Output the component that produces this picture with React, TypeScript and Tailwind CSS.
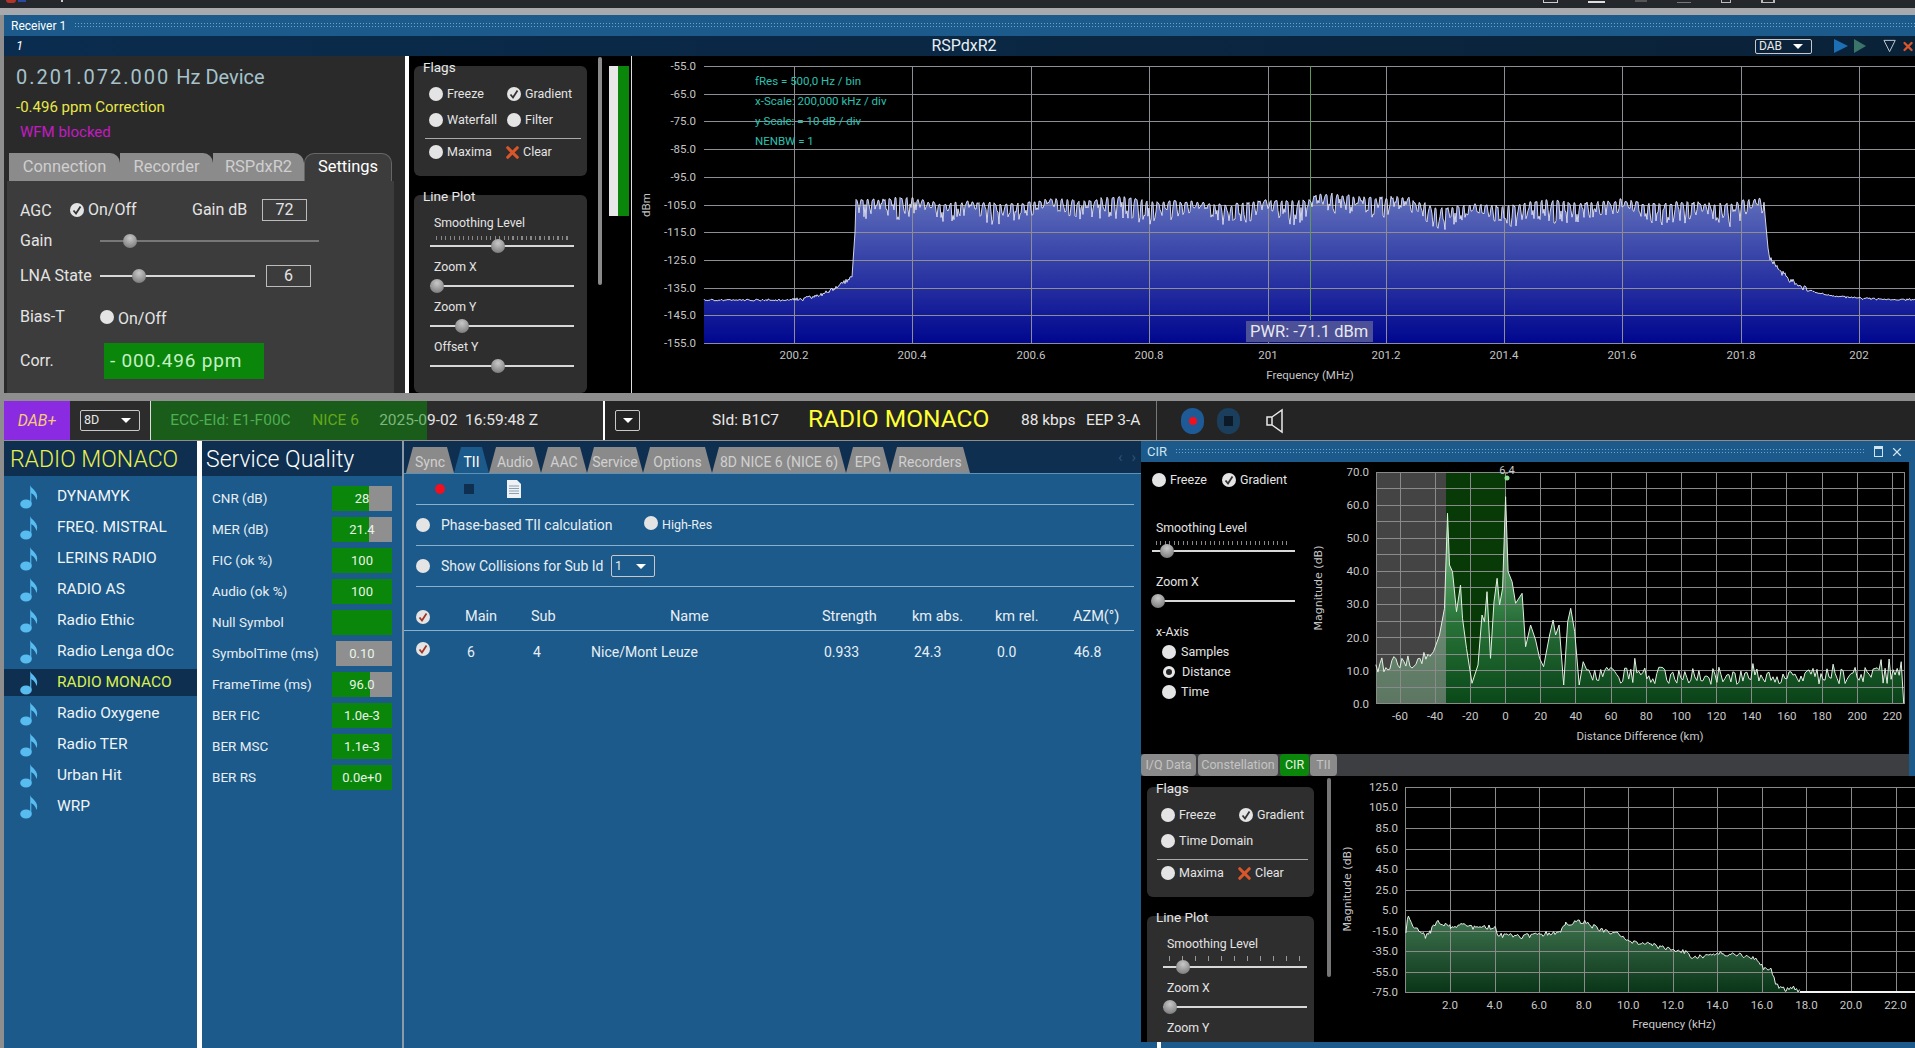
import { X } from 'lucide-react'

let seed = 4711
const rnd = () => {
  seed = (seed * 16807) % 2147483647
  return seed / 2147483647
}
const jit = (n: number) => (rnd() - 0.5) * 2 * n

const toPoly = (pts: number[][]) => pts.map((p) => `${p[0].toFixed(1)},${p[1].toFixed(1)}`).join(' ')

function spectrumPoints() {
  const pts: number[][] = []
  let phase = 0
  for (let x = 704; x <= 1915; x += 1) {
    let y = 300
    if (x < 790) y = 300 + jit(1)
    else if (x < 852) y = 300 - 23 * ((x - 790) / 62) ** 2 + jit(2)
    else if (x < 856) y = 277 - (x - 852) * 15
    else if (x < 1765) {
      phase += 0.95 + rnd() * 0.35
      const lift = x > 1310 && x < 1410 ? -3 : 0
      const sag = x > 1430 && x < 1620 ? 3 : 0
      const env = 200 + 2.5 * Math.sin(x / 37) + 1.5 * Math.sin(x / 11.3) + lift + sag
      const depth = 0.25 + 0.75 * Math.abs(Math.sin(x / 23 + Math.sin(x / 71) * 2))
      y = Math.sin(phase) > 0.2 ? env + rnd() * 3 : env + 3 + (2 + rnd() * 20) * depth
    } else if (x < 1769) y = 215 + (x - 1765) * 11
    else y = 300 - 42 * Math.exp(-(x - 1770) / 28) + jit(x < 1810 ? 3 : 1)
    pts.push([x, y])
  }
  return pts
}

function cirPoints() {
  const raw: number[][] = []
  for (let zx = 491; zx < 600; zx += 4) raw.push([zx, 815 - (zx - 491) * 0.25 + jit(24)])
  const peaks = [
    [606, 770], [618, 720], [628, 640], [634, 355], [638, 510], [644, 530], [652, 650], [660, 570], [664, 670],
    [672, 760], [683, 865], [695, 810], [703, 660], [708, 680], [713, 590], [720, 790], [727, 620], [733, 550],
    [738, 630], [744, 580], [750, 305], [755, 530], [763, 560], [770, 625], [783, 595], [790, 755], [800, 690],
    [810, 735], [818, 790], [826, 815], [838, 720], [845, 675], [850, 720], [857, 690], [866, 870], [874, 680],
    [880, 640], [888, 710], [897, 870], [905, 800],
  ]
  raw.push(...peaks)
  for (let zx = 912; zx < 1540; zx += 4) {
    const spike = rnd() > 0.93 ? -30 : 0
    raw.push([zx, 842 + jit(26) + spike])
  }
  raw.push([1540, 800], [1545, 925])
  return raw.map((p) => [1130 + p[0] / 1.997, 395 + p[1] / 3])
}

function freqPoints() {
  const anchors = [
    [551, 560], [556, 508], [565, 545], [580, 560], [590, 575], [600, 560], [612, 530], [640, 545], [670, 540],
    [690, 550], [730, 545], [735, 570], [780, 575], [810, 570], [860, 560], [870, 535], [905, 530], [940, 555],
    [970, 565], [1000, 590], [1040, 600], [1080, 615], [1110, 620], [1120, 640], [1170, 625], [1220, 630],
    [1250, 640], [1265, 670], [1280, 670], [1290, 720], [1310, 735], [1325, 725], [1340, 740],
  ]
  const out: number[][] = []
  for (let i = 0; i < anchors.length - 1; i++) {
    const [a, b] = [anchors[i], anchors[i + 1]]
    for (let x = a[0]; x < b[0]; x += 3) {
      const t = (x - a[0]) / (b[0] - a[0])
      out.push([x, a[1] + (b[1] - a[1]) * t + jit(7)])
    }
  }
  out.push([1340, 741], [1575, 741])
  return out.map((p) => [1130 + p[0] / 1.997, 745 + Math.min(p[1], 741) / 3])
}

const stations = ['DYNAMYK', 'FREQ. MISTRAL', 'LERINS RADIO', 'RADIO AS', 'Radio Ethic', 'Radio Lenga dOc', 'RADIO MONACO', 'Radio Oxygene', 'Radio TER', 'Urban Hit', 'WRP']

const quality = [
  { label: 'CNR (dB)', value: '28', green: 37 },
  { label: 'MER (dB)', value: '21.4', green: 37 },
  { label: 'FIC (ok %)', value: '100', green: 60 },
  { label: 'Audio (ok %)', value: '100', green: 60 },
  { label: 'Null Symbol', value: '', green: 60 },
  { label: 'SymbolTime (ms)', value: '0.10', green: 0 },
  { label: 'FrameTime (ms)', value: '96.0', green: 38 },
  { label: 'BER FIC', value: '1.0e-3', green: 60 },
  { label: 'BER MSC', value: '1.1e-3', green: 60 },
  { label: 'BER RS', value: '0.0e+0', green: 60 },
]

const tiiTabs = [
  { label: 'Sync', w: 'w-[48px]' },
  { label: 'TII', w: 'w-[35px]', active: true },
  { label: 'Audio', w: 'w-[52px]' },
  { label: 'AAC', w: 'w-[46px]' },
  { label: 'Service', w: 'w-[56px]' },
  { label: 'Options', w: 'w-[69px]' },
  { label: '8D NICE 6 (NICE 6)', w: 'w-[134px]' },
  { label: 'EPG', w: 'w-[44px]' },
  { label: 'Recorders', w: 'w-[80px]' },
]

function Dot({ checked, tone = 'check' }: { checked?: boolean; tone?: 'check' | 'red' | 'ring' }) {
  if (tone === 'ring') {
    return <span className="block h-3 w-3 shrink-0 rounded-full border-[3px] border-[#e8e8e8] bg-[#222]" />
  }
  return (
    <span className="flex h-[14px] w-[14px] shrink-0 items-center justify-center rounded-full bg-[#e4e4e4]">
      {checked && (
        <svg viewBox="0 0 14 14" className="h-[14px] w-[14px]" fill="none">
          <path d="M3.5 7.5 6 10.5 10.5 3.5" stroke={tone === 'red' ? '#a3342a' : '#333'} strokeWidth="1.8" />
        </svg>
      )}
    </span>
  )
}

function Opt({ label, checked, className }: { label: string; checked?: boolean; className?: string }) {
  return (
    <div className={`flex items-center gap-1 text-[12.5px] text-[#e4e4e4] ${className ?? ''}`}>
      <Dot checked={checked} />
      <span>{label}</span>
    </div>
  )
}

function ClearBtn() {
  return (
    <div className="flex items-center text-[12.5px] text-[#e4e4e4]">
      <X size={19} strokeWidth={4} className="-ml-1 text-[#d8562a]" />
      <span className="ml-px">Clear</span>
    </div>
  )
}

function Slider({ width, at, dim, className }: { width: number; at: number; dim?: boolean; className?: string }) {
  return (
    <div className={`relative flex h-[10px] items-center ${className ?? ''}`} style={{ width }}>
      <div className={`h-[2px] w-full ${dim ? 'bg-[#777]' : 'bg-[#d8d8d8]'}`} />
      <div
        className="absolute top-[-2px] h-[14px] w-[14px] rounded-full bg-[radial-gradient(circle_at_50%_30%,#c8c8c8,#6c6c6c)]"
        style={{ left: at - 7 }}
      />
    </div>
  )
}

function Panel({ title, className, children }: { title: string; className: string; children: React.ReactNode }) {
  return (
    <div className={`flex flex-col rounded-md bg-[#2e2e2e] ${className}`}>
      <div className="-mt-[7px] h-4 shrink-0 pl-[9px] text-[13.5px] leading-4 text-[#e8e8e8]">{title}</div>
      {children}
    </div>
  )
}

function LinePlot({ rows, thumb, sparse }: { rows: { label: string; at?: number }[]; thumb: number; sparse?: boolean }) {
  return (
    <Panel title="Line Plot" className="mt-[19px] h-[198px] w-full">
      <div className="mt-[11px] h-4 pl-5 text-[12.3px] leading-4 text-[#e4e4e4]">Smoothing Level</div>
      {sparse ? (
        <div className="mt-1 ml-[22px] h-[5px] w-[132px] bg-[repeating-linear-gradient(90deg,#999_0_1px,transparent_1px_13px)]" />
      ) : (
        <div className="mt-[5px] ml-[22px] h-1 w-[132px] bg-[repeating-linear-gradient(90deg,#888_0_1px,transparent_1px_4.5px)]" />
      )}
      <Slider width={144} at={thumb} className="mt-[1px] ml-[16px]" />
      {rows.map((r) => (
        <div key={r.label}>
          <div className="mt-2 h-4 pl-5 text-[12.3px] leading-4 text-[#e4e4e4]">{r.label}</div>
          {r.at !== undefined && <Slider width={144} at={r.at} className="mt-[6px] ml-[16px]" />}
        </div>
      ))}
    </Panel>
  )
}

function Select({ label, className }: { label: string; className: string }) {
  return (
    <div className={`flex items-center justify-between rounded-[2px] border border-[#c8c8c8] px-[2px] text-[12.5px] text-[#e8e8e8] ${className}`}>
      <span className="pl-[1px]">{label}</span>
      <span className="mr-[6px] h-0 w-0 border-x-[5px] border-t-[5px] border-x-transparent border-t-white" />
    </div>
  )
}

function SpectrumChart() {
  const pts = spectrumPoints()
  const rows = ['-55.0', '-65.0', '-75.0', '-85.0', '-95.0', '-105.0', '-115.0', '-125.0', '-135.0', '-145.0', '-155.0']
  const ys = [66, 94, 121, 149, 177, 205, 232, 260, 288, 315, 343]
  const cols = ['200.2', '200.4', '200.6', '200.8', '201', '201.2', '201.4', '201.6', '201.8', '202']
  const xs = [794, 912, 1031, 1149, 1268, 1386, 1504, 1622, 1741, 1859]
  return (
    <svg viewBox="632 56 1283 337" className="h-[337px] w-[1283px] shrink-0" fontFamily="Roboto, sans-serif">
      <defs>
        <linearGradient id="specFill" gradientUnits="userSpaceOnUse" x1="0" y1="205" x2="0" y2="343">
          <stop offset="0" stopColor="#5a68b8" />
          <stop offset="1" stopColor="#00078f" />
        </linearGradient>
      </defs>
      <polygon points={`704,343 ${toPoly(pts)} 1915,343`} fill="url(#specFill)" />
      <g stroke="#8d8d95" shapeRendering="crispEdges">
        {ys.map((y) => <line key={y} x1="704" x2="1915" y1={y} y2={y} />)}
        {xs.map((x) => <line key={x} x1={x} x2={x} y1="66" y2="343" />)}
      </g>
      <line x1="1310" x2="1310" y1="66" y2="320" stroke="#5f9a55" shapeRendering="crispEdges" />
      <polyline points={toPoly(pts)} fill="none" stroke="#e4e7f8" strokeWidth="0.9" />
      <g fill="#c4c4c4" fontSize="11.5" textAnchor="end">
        {rows.map((t, i) => <text key={t} x="696" y={ys[i] + 4}>{t}</text>)}
      </g>
      <g fill="#c4c4c4" fontSize="11.5" textAnchor="middle">
        {cols.map((t, i) => <text key={t} x={xs[i]} y="359">{t}</text>)}
        <text x="1310" y="379">Frequency (MHz)</text>
        <text x="0" y="0" transform="translate(650 205) rotate(-90)">dBm</text>
      </g>
      <g fill="#2cc0b0" fontSize="11.5">
        <text x="755" y="85">fRes = 500,0 Hz / bin</text>
        <text x="755" y="105">x-Scale: 200,000 kHz / div</text>
        <text x="755" y="125">y-Scale: = 10 dB / div</text>
        <text x="755" y="145">NENBW = 1</text>
      </g>
      <rect x="1246" y="321" width="127" height="21" fill="#4c5096" />
      <text x="1250" y="337" fill="#e8e8f0" fontSize="16.5">PWR: -71.1 dBm</text>
    </svg>
  )
}

function CirChart() {
  const pts = cirPoints()
  const poly = `1376,704 ${toPoly(pts)} 1904,704`
  const labels = ['70.0', '60.0', '50.0', '40.0', '30.0', '20.0', '10.0', '0.0']
  const cols = ['-60', '-40', '-20', '0', '20', '40', '60', '80', '100', '120', '140', '160', '180', '200', '220']
  return (
    <svg viewBox="1300 462 609 292" className="h-[292px] w-[609px] shrink-0" fontFamily="Roboto, sans-serif">
      <defs>
        <linearGradient id="cirFill" gradientUnits="userSpaceOnUse" x1="0" y1="520" x2="0" y2="704">
          <stop offset="0" stopColor="#8fe09a" stopOpacity="0.85" />
          <stop offset="0.55" stopColor="#2c7a3e" stopOpacity="0.9" />
          <stop offset="1" stopColor="#0a4a1a" stopOpacity="0.9" />
        </linearGradient>
        <clipPath id="cirGray">
          <rect x="1376" y="472" width="70" height="232" />
        </clipPath>
      </defs>
      <rect x="1376" y="472" width="70" height="232" fill="#444" />
      <rect x="1446" y="472" width="60" height="232" fill="#083a08" />
      <polygon points={poly} fill="url(#cirFill)" />
      <polygon points={poly} fill="#9a9a9a" fillOpacity="0.55" clipPath="url(#cirGray)" />
      <g stroke="#8a8a8a" shapeRendering="crispEdges">
        {Array.from({ length: 15 }, (_, i) => <line key={i} x1="1376" x2="1904" y1={472 + i * 16.57} y2={472 + i * 16.57} />)}
        {cols.map((_, i) => <line key={i} x1={1400 + i * 35.17} x2={1400 + i * 35.17} y1="472" y2="704" />)}
        <line x1="1376" x2="1376" y1="472" y2="704" />
        <line x1="1904" x2="1904" y1="472" y2="704" />
      </g>
      <polyline points={toPoly(pts)} fill="none" stroke="#e2efe2" strokeWidth="1" />
      <circle cx="1507" cy="478" r="2.5" fill="#8fe08f" />
      <text x="1507" y="474" fill="#c8c8c8" fontSize="11" textAnchor="middle">6.4</text>
      <g fill="#c8c8c8" fontSize="11.5" textAnchor="end">
        {labels.map((t, i) => <text key={t} x="1369" y={476 + i * 33.1}>{t}</text>)}
      </g>
      <g fill="#c8c8c8" fontSize="11.5" textAnchor="middle">
        {cols.map((t, i) => <text key={t} x={1400 + i * 35.17} y="720">{t}</text>)}
        <text x="1640" y="740">Distance Difference (km)</text>
      </g>
      <text transform="translate(1322 588) rotate(-90)" fill="#c8c8c8" fontSize="11" textAnchor="middle" fontFamily="DejaVu Sans, sans-serif">Magnitude (dB)</text>
    </svg>
  )
}

function FreqChart() {
  const pts = freqPoints()
  const ys = [787, 807, 828, 849, 869, 890, 910, 931, 951, 972, 992]
  const labels = ['125.0', '105.0', '85.0', '65.0', '45.0', '25.0', '5.0', '-15.0', '-35.0', '-55.0', '-75.0']
  const cols = ['2.0', '4.0', '6.0', '8.0', '10.0', '12.0', '14.0', '16.0', '18.0', '20.0', '22.0']
  return (
    <svg viewBox="1331 776 584 266" className="h-[266px] w-[584px] shrink-0" fontFamily="Roboto, sans-serif">
      <defs>
        <linearGradient id="freqFill" gradientUnits="userSpaceOnUse" x1="0" y1="925" x2="0" y2="992">
          <stop offset="0" stopColor="#3a6e4a" />
          <stop offset="1" stopColor="#0a3518" />
        </linearGradient>
      </defs>
      <polygon points={`1405,992 ${toPoly(pts)} 1915,992`} fill="url(#freqFill)" />
      <g stroke="#8a8a8a" shapeRendering="crispEdges">
        {ys.map((y) => <line key={y} x1="1405" x2="1915" y1={y} y2={y} />)}
        {cols.map((_, i) => <line key={i} x1={1450.5 + i * 44.55} x2={1450.5 + i * 44.55} y1="787" y2="992" />)}
        <line x1="1405" x2="1405" y1="787" y2="992" />
      </g>
      <polyline points={toPoly(pts.slice(0, -2))} fill="none" stroke="#e8efe8" strokeWidth="1" />
      <line x1="1800" x2="1915" y1="992" y2="992" stroke="#f4f4f4" strokeWidth="2" />
      <g fill="#c8c8c8" fontSize="11.5" textAnchor="end">
        {labels.map((t, i) => <text key={t} x="1398" y={ys[i] + 4}>{t}</text>)}
      </g>
      <g fill="#c8c8c8" fontSize="11.5" textAnchor="middle">
        {cols.map((t, i) => <text key={t} x={1450 + i * 44.55} y="1009">{t}</text>)}
        <text x="1674" y="1028">Frequency (kHz)</text>
      </g>
      <text transform="translate(1351 889) rotate(-90)" fill="#c8c8c8" fontSize="11" textAnchor="middle" fontFamily="DejaVu Sans, sans-serif">Magnitude (dB)</text>
    </svg>
  )
}

function Note() {
  return (
    <svg viewBox="0 0 18 25" className="h-[25px] w-[18px] shrink-0">
      <ellipse cx="6" cy="20" rx="5.8" ry="4.6" fill="#58bcf0" />
      <path d="M10.2 20V1c.6 3.6 7 5.4 7 11.5 0 1.4-.3 2.6-1 3.5.1-3.6-3.6-6.2-4.9-7V20Z" fill="#58bcf0" />
    </svg>
  )
}

export default function App() {
  return (
    <div className="flex h-[1048px] w-[1915px] flex-col overflow-hidden bg-[#8e8e8e] font-['Roboto','Noto_Sans',sans-serif]">
      {/* desktop strip, mostly cropped away */}
      <div className="flex h-2 items-start gap-[30px] bg-[#24272b] pr-[140px] pl-[6px]">
        <span className="h-[3px] w-[10px] rounded-b-full bg-[#b0342a]" />
        <span className="-ml-[28px] h-[2px] w-[8px] bg-[#2a4aa0]" />
        <span className="ml-[5px] h-[2px] w-[2px] bg-[#ccc]" />
        <span className="flex-1" />
        <span className="h-[3px] w-[15px] border-x border-b border-[#ccc]" />
        <span className="h-[3px] w-[17px] border-b-2 border-[#ddd]" />
        <span className="h-[2px] w-[12px] bg-[#555]" />
        <span className="h-[3px] w-[14px] border-b border-[#777]" />
        <span className="h-[3px] w-[10px] border-x border-b border-[#bbb]" />
        <span className="h-[3px] w-[14px] border-x-2 border-b border-[#bbb]" />
      </div>
      <div className="h-[7px] bg-[#a8a9ac]" />

      {/* receiver window */}
      <div className="flex h-[378px] flex-col bg-[#8e8e8e] pl-1">
        <div className="flex h-[21px] items-center bg-[#1b5a8a]">
          <span className="pl-[7px] text-[12px] text-white">Receiver 1</span>
          <div className="ml-2 h-[7px] flex-1 bg-[radial-gradient(#6aa6cc_0.7px,transparent_0.8px)] bg-[length:3px_3px]" />
        </div>
        <div className="relative flex h-5 items-center bg-[linear-gradient(90deg,#0a2c4e,#0a2238)]">
          <span className="w-5 shrink-0 pl-3 text-[13px] italic text-white">1</span>
          <span className="ml-[880px] w-[120px] shrink-0 text-center text-[16px] text-[#e8eef4]">RSPdxR2</span>
          <Select label="DAB" className="ml-[731px] h-[15px] w-[60px] text-[12px]" />
          <div className="ml-[22px] h-0 w-0 border-y-[7px] border-l-[14px] border-y-transparent border-l-[#1d6fb5]" />
          <div className="ml-[6px] h-0 w-0 border-y-[7px] border-l-[12px] border-y-transparent border-l-[#3b7468]" />
          <svg viewBox="0 0 14 14" className="ml-[17px] h-[14px] w-[14px]" fill="none" stroke="#c8d4dc">
            <path d="M1 1h12L7 13Z" />
          </svg>
          <X size={15} strokeWidth={4} className="ml-[5px] text-[#d8562a]" />
        </div>
        <div className="flex h-[337px] bg-black">
          {/* device column */}
          <div className="h-[337px] w-[401px] shrink-0 bg-[#2a2a2a]">
            <div className="flex h-[42px] items-center pl-3 text-[20px] text-[#a6c2cc]">
              <span className="tracking-[2px]">0.201.072.000</span>
              <span className="pl-[6px]">Hz Device</span>
            </div>
            <div className="flex h-[18px] items-center pl-3 text-[15px] text-[#e8e84a]">-0.496 ppm Correction</div>
            <div className="mt-[7px] flex h-[18px] items-center pl-4 text-[15px] text-[#c41ac4]">WFM blocked</div>
            <div className="mt-3 ml-[5px] flex h-7 items-stretch text-[16.5px]">
              <div className="flex w-[111px] items-center justify-center rounded-tr-[10px] bg-[#8b8b8b] text-[#cfcfcf]">Connection</div>
              <div className="flex w-[93px] items-center justify-center rounded-tr-[10px] bg-[#8b8b8b] text-[#cfcfcf]">Recorder</div>
              <div className="flex w-[91px] items-center justify-center rounded-tr-[10px] bg-[#8b8b8b] text-[#cfcfcf]">RSPdxR2</div>
              <div className="flex w-[88px] items-center justify-center rounded-t-[10px] border-x border-t border-[#666] bg-[#3c3c3c] text-white">Settings</div>
            </div>
            <div className="ml-[3px] h-[212px] w-[387px] bg-[#3c3c3c] text-[16px] text-[#e4e4e4]">
              <div className="flex h-[22px] translate-y-[18px] items-center pl-[13px]">
                <span className="w-[50px] translate-y-px">AGC</span>
                <Dot checked />
                <span className="w-[108px] pl-[4px]">On/Off</span>
                <span className="w-[70px]">Gain dB</span>
                <span className="flex h-[22px] w-[45px] items-center justify-center border border-[#bbb]">72</span>
              </div>
              <div className="flex h-[22px] translate-y-[27px] items-center pl-[13px]">
                <span className="w-[80px]">Gain</span>
                <Slider width={219} at={30} dim />
              </div>
              <div className="flex h-[22px] translate-y-[40px] items-center pl-[13px]">
                <span className="w-[80px]">LNA State</span>
                <Slider width={155} at={39} />
                <span className="ml-[11px] flex h-[22px] w-[45px] items-center justify-center border border-[#bbb]">6</span>
              </div>
              <div className="flex h-[22px] translate-y-[59px] items-center pl-[13px]">
                <span className="w-[80px]">Bias-T</span>
                <Dot />
                <span className="pl-[4px] pt-[3px]">On/Off</span>
              </div>
              <div className="flex h-9 translate-y-[74px] items-center pl-[13px]">
                <span className="w-[84px]">Corr.</span>
                <div className="flex h-9 w-[160px] items-center bg-[#0a860a] pl-[6px] text-[19px] tracking-[0.8px] text-[#c4f0c4]">- 000.496 ppm</div>
              </div>
            </div>
          </div>
          <div className="w-1 shrink-0 bg-white" />
          {/* flags column */}
          <div className="flex h-[337px] w-[222px] shrink-0 overflow-hidden">
            <div className="ml-[5px] w-[173px] shrink-0 pt-[10px]">
              <Panel title="Flags" className="h-[110px]">
                <div className="mt-[9px] flex h-5 items-center pl-[15px]">
                  <Opt label="Freeze" className="w-[78px]" />
                  <Opt label="Gradient" checked />
                </div>
                <div className="mt-[6px] flex h-5 items-center pl-[15px]">
                  <Opt label="Waterfall" className="w-[78px]" />
                  <Opt label="Filter" />
                </div>
                <div className="mt-2 ml-[11px] h-px w-[156px] shrink-0 bg-[#aaa]" />
                <div className="mt-[3px] flex h-5 items-center pl-[15px]">
                  <Opt label="Maxima" className="w-[78px]" />
                  <ClearBtn />
                </div>
              </Panel>
              <LinePlot
                thumb={68}
                rows={[
                  { label: 'Zoom X', at: 7 },
                  { label: 'Zoom Y', at: 32 },
                  { label: 'Offset Y', at: 68 },
                ]}
              />
            </div>
            <div className="mt-px ml-[11px] h-[228px] w-1 shrink-0 rounded bg-[#8a8a8a]" />
            <div className="mt-[10px] ml-[7px] flex h-[150px] w-5 shrink-0">
              <div className="w-[9px] bg-[#e8e8e8]" />
              <div className="w-[11px] bg-[#0a860a]" />
            </div>
          </div>
          <div className="w-px shrink-0 bg-[#ddd]" />
          <SpectrumChart />
        </div>
      </div>
      <div className="h-2 bg-[#8e8e8e]" />

      {/* status row */}
      <div className="flex h-[39px] pl-1 text-[15.5px]">
        <div className="flex w-[66px] items-center justify-center bg-[#8a2be2] text-[16px] italic text-[#f5c878]">DAB+</div>
        <div className="flex w-[533px] items-stretch bg-[#2c2c2c]">
          <div className="flex w-20 items-center pl-[10px]">
            <Select label="8D" className="h-[21px] w-[60px]" />
          </div>
          <div className="w-px bg-[#ddd]" />
          <div className="flex w-[276px] shrink-0 items-center justify-end overflow-hidden whitespace-nowrap bg-[#1a5c1a]">
            <span className="shrink-0 w-[142px] text-[#4caf50]">ECC-EId: E1-F00C</span>
            <span className="shrink-0 w-[67px] text-[#63a81c]">NICE 6</span>
            <span className="shrink-0 text-[#7cb87c]">2025-0</span>
          </div>
          <div className="flex items-center whitespace-pre text-[#e4e4e4]">9-02  16:59:48 Z</div>
        </div>
        <div className="w-[2px] bg-white" />
        <div className="flex flex-1 items-center bg-[#242424] text-[#e8e8e8]">
          <div className="ml-[10px] flex h-[21px] w-[25px] items-center justify-center rounded-[2px] border border-[#c8c8c8]">
            <span className="h-0 w-0 border-x-[5px] border-t-[5px] border-x-transparent border-t-white" />
          </div>
          <span className="ml-[72px] w-[96px]">SId: B1C7</span>
          <span className="w-[213px] -translate-y-px text-[24.5px] text-[#ffff33]">RADIO MONACO</span>
          <span className="w-[65px]">88 kbps</span>
          <span className="w-[70px]">EEP 3-A</span>
          <div className="h-[39px] w-px bg-[#777]" />
          <div className="ml-[24px] flex h-[26px] w-[23px] items-center justify-center rounded-full bg-[#1e5a96]">
            <span className="h-2 w-2 rounded-full bg-[#f01020]" />
          </div>
          <div className="ml-[13px] flex h-[26px] w-[23px] items-center justify-center rounded-full bg-[#1a3e5c]">
            <span className="h-[10px] w-[9px] bg-[#0c1a28]" />
          </div>
          <svg viewBox="0 0 18 26" className="ml-[26px] h-[26px] w-[18px]" fill="none" stroke="#e8e8e8" strokeWidth="1.5">
            <path d="M1 9h5v8H1zM6 9l10-7v22L6 17" />
          </svg>
        </div>
      </div>
      <div className="h-px bg-[#8e8e8e]" />

      {/* lower body */}
      <div className="flex h-[607px] pl-1">
        <div className="w-[193px] shrink-0 bg-[#1b5a8a]">
          <div className="flex h-[35px] items-center bg-[#0e2f4f] pt-[3px] pl-[6px] text-[23px] font-light text-[#e8f050]">RADIO MONACO</div>
          <div className="pt-[5px]">
            {stations.map((name) => {
              const sel = name === 'RADIO MONACO'
              return (
                <div key={name} className="flex h-[31px] items-center">
                  <div className={`flex h-[27px] w-full items-center gap-[19px] pl-4 text-[15.5px] ${sel ? 'bg-[#0e2f4f] text-[#d8f050]' : 'text-[#f0f4f8]'}`}>
                    <Note />
                    <span>{name}</span>
                  </div>
                </div>
              )
            })}
          </div>
        </div>
        <div className="w-[5px] shrink-0 bg-white" />
        <div className="w-[200px] shrink-0 bg-[#1b5a8a]">
          <div className="flex h-[35px] items-center bg-[#0e2f4f] pt-[3px] pl-1 text-[23px] font-light text-white">Service Quality</div>
          <div className="flex flex-col gap-[6px] pt-[10px]">
            {quality.map((q) => (
              <div key={q.label} className="flex h-[25px] items-center pl-[10px]">
                <span className="w-[120px] text-[13.5px] text-[#e8eef4]">{q.label}</span>
                <div className="relative flex h-[25px] w-[60px] justify-end text-[13px] text-[#e8f4e8]">
                  <div className="h-full bg-[#0a860a]" style={{ width: q.green }} />
                  {q.green < 60 && <div className={`h-full bg-[#8f8f8f] ${q.green === 0 ? 'w-[56px]' : 'flex-1'}`} />}
                  <span className="absolute inset-0 flex items-center justify-center">{q.value}</span>
                </div>
              </div>
            ))}
          </div>
        </div>
        <div className="w-[2px] shrink-0 bg-[#8a9aa8]" />

        {/* TII panel */}
        <div className="w-[737px] shrink-0 bg-[#1b5a8a] text-[14px] text-[#e8eef4]">
          <div className="flex h-[33px] items-end border-b border-[#5c92b8] bg-[#0e2f4f] pl-[2px]">
            {tiiTabs.map((t) => (
              <div
                key={t.label}
                className={`flex h-[26px] shrink-0 items-center justify-center pt-1 [clip-path:polygon(7px_0,calc(100%-7px)_0,100%_100%,0_100%)] text-[14px] ${t.w} ${t.active ? 'bg-[#1b5a8a] text-white' : 'bg-[#8a8a8a] text-[#d0d0d0]'}`}
              >
                {t.label}
              </div>
            ))}
            <div className="flex flex-1 justify-end gap-[9px] self-center pr-[5px] text-[15px] text-[#2f5578]">
              <span>‹</span>
              <span>›</span>
            </div>
          </div>
          <div className="flex h-[30px] items-center pl-[31px]">
            <span className="h-[10px] w-[10px] rounded-full bg-[#f01020]" />
            <span className="ml-[19px] h-[10px] w-[10px] bg-[#0e2f4f]" />
            <svg viewBox="0 0 14 18" className="ml-[33px] h-[18px] w-[14px]">
              <path d="M0 0h10l4 4v14H0z" fill="#eef2f6" />
              <path d="M2 6h10M2 8.5h10M2 11h10M2 13.5h10" stroke="#8aa0b0" strokeWidth="1" />
            </svg>
          </div>
          <div className="ml-3 h-px w-[718px] bg-[#8ab0cc]" />
          <div className="flex h-10 items-center pl-3">
            <Dot />
            <span className="ml-[11px] w-[203px]">Phase-based TII calculation</span>
            <span className="-translate-y-[2px]"><Dot /></span>
            <span className="ml-1 text-[12.5px]">High-Res</span>
          </div>
          <div className="ml-3 h-px w-[718px] bg-[#8ab0cc]" />
          <div className="flex h-10 items-center pl-3">
            <Dot />
            <span className="ml-[11px] w-[170px]">Show Collisions for Sub Id</span>
            <Select label="1" className="h-[22px] w-[44px]" />
          </div>
          <div className="ml-3 h-px w-[718px] bg-[#8ab0cc]" />
          <div className="mt-[18px] grid h-[26px] w-[730px] grid-cols-[61px_66px_60px_231px_90px_83px_78px_auto] items-center border-b border-[#8ab0cc] pb-[2px] text-[14.5px]">
            <span className="pl-3"><Dot checked tone="red" /></span>
            <span>Main</span>
            <span>Sub</span>
            <span className="pl-[79px]">Name</span>
            <span>Strength</span>
            <span>km abs.</span>
            <span>km rel.</span>
            <span>AZM(°)</span>
          </div>
          <div className="mt-2 grid h-[26px] w-[730px] grid-cols-[61px_66px_60px_231px_90px_83px_78px_auto] items-center">
            <span className="-translate-y-[3px] pl-3"><Dot checked tone="red" /></span>
            <span className="pl-[2px]">6</span>
            <span className="pl-[2px]">4</span>
            <span>Nice/Mont Leuze</span>
            <span className="pl-[2px]">0.933</span>
            <span className="pl-[2px]">24.3</span>
            <span className="pl-[2px]">0.0</span>
            <span className="pl-[1px]">46.8</span>
          </div>
        </div>

        {/* CIR window */}
        <div className="w-[774px] shrink-0 bg-[#1b5a8a]">
          <div className="flex h-[21px] w-[768px] items-center bg-[#1b5a8a] pl-[6px] text-[13px] text-[#cfe4f0]">
            <span>CIR</span>
            <div className="mx-2 h-[7px] flex-1 bg-[radial-gradient(#6aa6cc_0.7px,transparent_0.8px)] bg-[length:3px_3px]" />
            <span className="mr-[7px] h-[11px] w-[9px] border border-t-[3px] border-[#cfe4f0]" />
            <X size={14} className="mr-[5px] text-[#cfe4f0]" />
          </div>
          <div className="flex h-[292px] w-[768px] bg-black">
            <div className="w-[159px] shrink-0">
              <div className="mt-2 flex h-5 items-center pl-[11px]">
                <Opt label="Freeze" className="w-[70px]" />
                <Opt label="Gradient" checked />
              </div>
              <div className="mt-[30px] h-4 pl-[15px] text-[12.3px] leading-4 text-[#e4e4e4]">Smoothing Level</div>
              <div className="mt-[5px] ml-[15px] h-1 w-[132px] bg-[repeating-linear-gradient(90deg,#888_0_1px,transparent_1px_4.5px)]" />
              <Slider width={143} at={15} className="mt-[1px] ml-[11px]" />
              <div className="mt-[18px] h-4 pl-[15px] text-[12.3px] leading-4 text-[#e4e4e4]">Zoom X</div>
              <Slider width={143} at={6} className="mt-[6px] ml-[11px]" />
              <div className="mt-[18px] h-4 pl-[15px] text-[12.3px] leading-4 text-[#e4e4e4]">x-Axis</div>
              <div className="mt-[2px] flex h-5 items-center gap-[5px] pl-[21px] text-[12.5px] text-[#e4e4e4]"><Dot /><span>Samples</span></div>
              <div className="flex h-5 items-center gap-[7px] pl-[22px] text-[12.5px] text-[#e4e4e4]"><Dot tone="ring" /><span>Distance</span></div>
              <div className="flex h-5 items-center gap-[5px] pl-[21px] text-[12.5px] text-[#e4e4e4]"><Dot /><span>Time</span></div>
            </div>
            <CirChart />
          </div>
          <div className="flex h-[22px] w-[768px] items-stretch gap-px bg-[#3c3e42] text-[12.5px]">
            <div className="flex w-[55px] items-center justify-center rounded-sm bg-[#8a8a8a] text-[#c4c4c4]">I/Q Data</div>
            <div className="ml-px flex w-[80px] items-center justify-center rounded-sm bg-[#8a8a8a] text-[#c4c4c4]">Constellation</div>
            <div className="ml-px flex w-[29px] items-center justify-center rounded-sm bg-[#0a860a] text-[#e8f4e8]">CIR</div>
            <div className="flex w-[27px] items-center justify-center rounded-sm bg-[#8a8a8a] text-[#c4c4c4]">TII</div>
          </div>
          <div className="flex h-[266px] overflow-hidden bg-black">
            <div className="ml-[6px] w-[167px] shrink-0 pt-[11px]">
              <Panel title="Flags" className="h-[110px]">
                <div className="mt-[9px] flex h-5 items-center pl-[14px]">
                  <Opt label="Freeze" className="w-[78px]" />
                  <Opt label="Gradient" checked />
                </div>
                <div className="mt-[6px] flex h-5 items-center pl-[14px]">
                  <Opt label="Time Domain" />
                </div>
                <div className="mt-2 ml-[10px] h-px w-[151px] shrink-0 bg-[#aaa]" />
                <div className="mt-[3px] flex h-5 items-center pl-[14px]">
                  <Opt label="Maxima" className="w-[78px]" />
                  <ClearBtn />
                </div>
              </Panel>
              <LinePlot
                thumb={20}
                sparse
                rows={[
                  { label: 'Zoom X', at: 7 },
                  { label: 'Zoom Y' },
                ]}
              />
            </div>
            <div className="mt-[2px] ml-[13px] h-[199px] w-1 shrink-0 rounded bg-[#777]" />
            <FreqChart />
          </div>
          <div className="h-[6px] pl-4">
            <div className="h-[6px] w-1 bg-white" />
          </div>
        </div>
      </div>
    </div>
  )
}
